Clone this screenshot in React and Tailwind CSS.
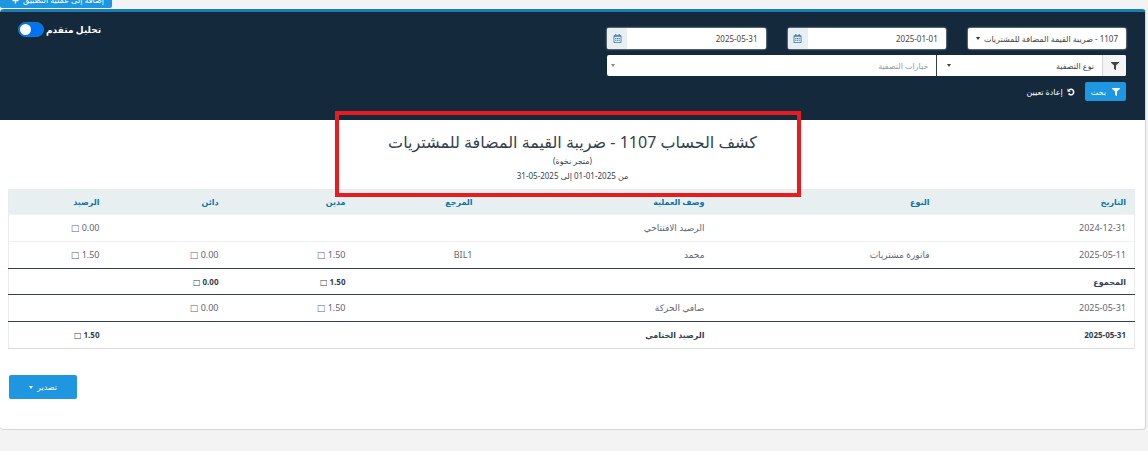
import React, { useState } from 'react';
import { FaFilter, FaPlus, FaRegCalendarAlt } from 'react-icons/fa';

const columns = [
    { label: "التاريخ", width: "w-[197px]" },
    { label: "النوع", width: "w-[225px]" },
    { label: "وصف العملية", width: "w-[232px]" },
    { label: "المرجع", width: "w-[127px]" },
    { label: "مدين", width: "w-[127px]" },
    { label: "دائن", width: "w-[119px]" },
    { label: "الرصيد", width: "w-[99px]" },
];

const rows = [
    { cells: ["2024-12-31", "", "الرصيد الافتتاحي", "", "", "", "0.00 □"], style: "h-[27px] border-[#f1f1f1] text-[9px] text-[#5f6673]" },
    { cells: ["2025-05-11", "فاتورة مشتريات", "محمد", "BIL1", "1.50 □", "0.00 □", "1.50 □"], style: "h-[27px] border-[#f1f1f1] text-[9px] text-[#5f6673]" },
    { cells: ["المجموع", "", "", "", "1.50 □", "0.00 □", ""], style: "h-[26px] border-[#333f4c] font-bold" },
    { cells: ["2025-05-31", "", "صافي الحركة", "", "1.50 □", "0.00 □", ""], style: "h-[27px] border-[#333f4c] text-[9px] text-[#5f6673]" },
    { cells: ["2025-05-31", "", "الرصيد الختامي", "", "", "", "1.50 □"], style: "h-[27px] border-[#333f4c] font-bold" },
];

const Caret = ({ className = "" }) => (
    <svg viewBox="0 0 4 3" className={`h-[3px] w-1 fill-current ${className}`} aria-hidden="true">
        <path d="M0 0h4L2 3z" />
    </svg>
);

const ResetIcon = () => (
    <svg viewBox="0 0 16 16" className="size-2" fill="none" stroke="currentColor" strokeWidth="3" aria-hidden="true">
        <path d="M4 4.2A5.5 5.5 0 1 1 3.2 11" />
        <path d="M1 1v6.5h6.5z" fill="currentColor" stroke="none" />
    </svg>
);

const DateField = ({ id, label, value, onChange }) => (
    <div className="flex h-[21px] overflow-hidden rounded-xs bg-white shadow-[0_0_2px_#ffffff]">
        <input
            id={id}
            type="text"
            dir="ltr"
            aria-label={label}
            value={value}
            onChange={onChange}
            className="min-w-0 flex-1 px-2 text-right text-[8px] text-[#444444] outline-none"
        />
        <label htmlFor={id} className="flex w-5 items-center justify-center bg-[#e7eff1] text-[#337ab7]">
            <FaRegCalendarAlt className="size-[9px]" />
        </label>
    </div>
);

export default function App() {
    const [from, setFrom] = useState("2025-01-01");
    const [to, setTo] = useState("2025-05-31");
    const [advanced, setAdvanced] = useState(false);

    return (
        <div
            dir="rtl"
            className="min-h-screen bg-[#f3f3f3] text-[8px] leading-3 text-[#333f50] font-['Noto_Sans','DejaVu_Sans',sans-serif]"
        >
            <div className="flex h-2 items-end justify-end overflow-hidden">
                <button className="flex h-4 shrink-0 items-center gap-1 rounded-xs bg-[#1e96e0] ps-2 pe-3 text-white">
                    إضافة إلى عملية التطبيق
                    <FaPlus className="size-[7px]" />
                </button>
            </div>

            <main className="mt-px ms-0.5 rounded-sm border-t-3 border-r border-b border-t-[#1b7eb2] border-r-[#d2d6d8] border-b-[#d2d6d8] bg-white">
                <form
                    onSubmit={(e) => e.preventDefault()}
                    className="flex items-start justify-between bg-[#15293d] ps-[19px] pe-[18px] pb-[19px]"
                >
                    <div className="w-[47%] pe-0.5 pt-4">
                        <div className="grid grid-cols-3 gap-[22px]">
                            <div className="relative">
                                <select
                                    aria-label="الحساب"
                                    className="h-[21px] w-full appearance-none rounded-xs bg-white ps-2 pe-4 text-[8px] text-[#444444] shadow-[0_0_2px_#ffffff]"
                                >
                                    <option>1107 - ضريبة القيمة المضافة للمشتريات</option>
                                </select>
                                <Caret className="pointer-events-none absolute top-[9px] left-2 text-[#333333]" />
                            </div>
                            <DateField id="from" label="من" value={from} onChange={(e) => setFrom(e.target.value)} />
                            <DateField id="to" label="إلى" value={to} onChange={(e) => setTo(e.target.value)} />
                        </div>

                        <div className="mt-1.5 flex h-[21px] rounded-xs bg-white text-[#444444]">
                            <span className="flex w-[23px] items-center justify-center rounded-s-xs bg-[#f4f4f4]">
                                <FaFilter className="size-2" />
                            </span>
                            <div className="relative flex-1 border-s border-e border-s-[#d5d5d5] border-e-[#333f50]">
                                <select aria-label="نوع التصفية" className="size-full appearance-none px-2 text-[8px]">
                                    <option>نوع التصفية</option>
                                </select>
                                <Caret className="pointer-events-none absolute top-[9px] left-2.5" />
                            </div>
                            <div className="relative flex-2">
                                <select aria-label="خيارات التصفية" className="size-full appearance-none px-2 text-[8px] text-[#999999]">
                                    <option>خيارات التصفية</option>
                                </select>
                                <Caret className="pointer-events-none absolute top-[9px] left-1 text-[#888888]" />
                            </div>
                        </div>

                        <div className="mt-1.5 flex items-center gap-2.5 text-white">
                            <button type="submit" className="flex h-[19px] items-center gap-1.5 rounded-xs bg-[#1e96e0] px-1.5">
                                <FaFilter className="size-2" />
                                بحث
                            </button>
                            <button type="reset" className="flex items-center gap-1">
                                <ResetIcon />
                                إعادة تعيين
                            </button>
                        </div>
                    </div>

                    <label className="flex items-center gap-0.5 pt-2.5 text-[9px] font-bold text-white">
                        تحليل متقدم
                        <input
                            type="checkbox"
                            checked={advanced}
                            onChange={(e) => setAdvanced(e.target.checked)}
                            className="flex h-[15px] w-[26px] appearance-none items-center justify-end rounded-full border border-[#1b7eb2] bg-[#0072f5] px-px before:size-[11px] before:rounded-full before:bg-white checked:justify-start"
                        />
                    </label>
                </form>

                <header className="relative pt-2.5 pb-[7px] text-center">
                    <h1 className="text-base leading-6">كشف الحساب 1107 - ضريبة القيمة المضافة للمشتريات</h1>
                    <p className="mt-px">(متجر نخوة)</p>
                    <p className="mt-[3px]">من 2025-01-01 إلى 2025-05-31</p>
                    <div className="pointer-events-none absolute -top-[9px] left-[335px] h-[86px] w-[466px] border-4 border-[#e81b1e]" />
                </header>

                <section className="ps-2.5 pe-[9px] pb-[30px]">
                    <table className="w-full table-fixed border-collapse border border-[#e9ecee] border-b-[#dadcde]">
                        <thead>
                            <tr className="h-[25px] bg-[#e7eff1] text-[#0d74a5]">
                                {columns.map((col) => (
                                    <th key={col.label} className={`${col.width} px-2 text-start font-bold`}>{col.label}</th>
                                ))}
                            </tr>
                        </thead>
                        <tbody>
                            {rows.map((row, i) => (
                                <tr key={i} className={`border-t ${row.style}`}>
                                    {row.cells.map((cell, j) => (
                                        <td key={j} className="px-2">{cell}</td>
                                    ))}
                                </tr>
                            ))}
                        </tbody>
                    </table>

                    <div className="mt-[26px] flex justify-end">
                        <button className="flex h-6 items-center gap-1 rounded-xs bg-[#1e96e0] px-5 text-white">
                            تصدير
                            <Caret />
                        </button>
                    </div>
                </section>
            </main>
        </div>
    );
}
